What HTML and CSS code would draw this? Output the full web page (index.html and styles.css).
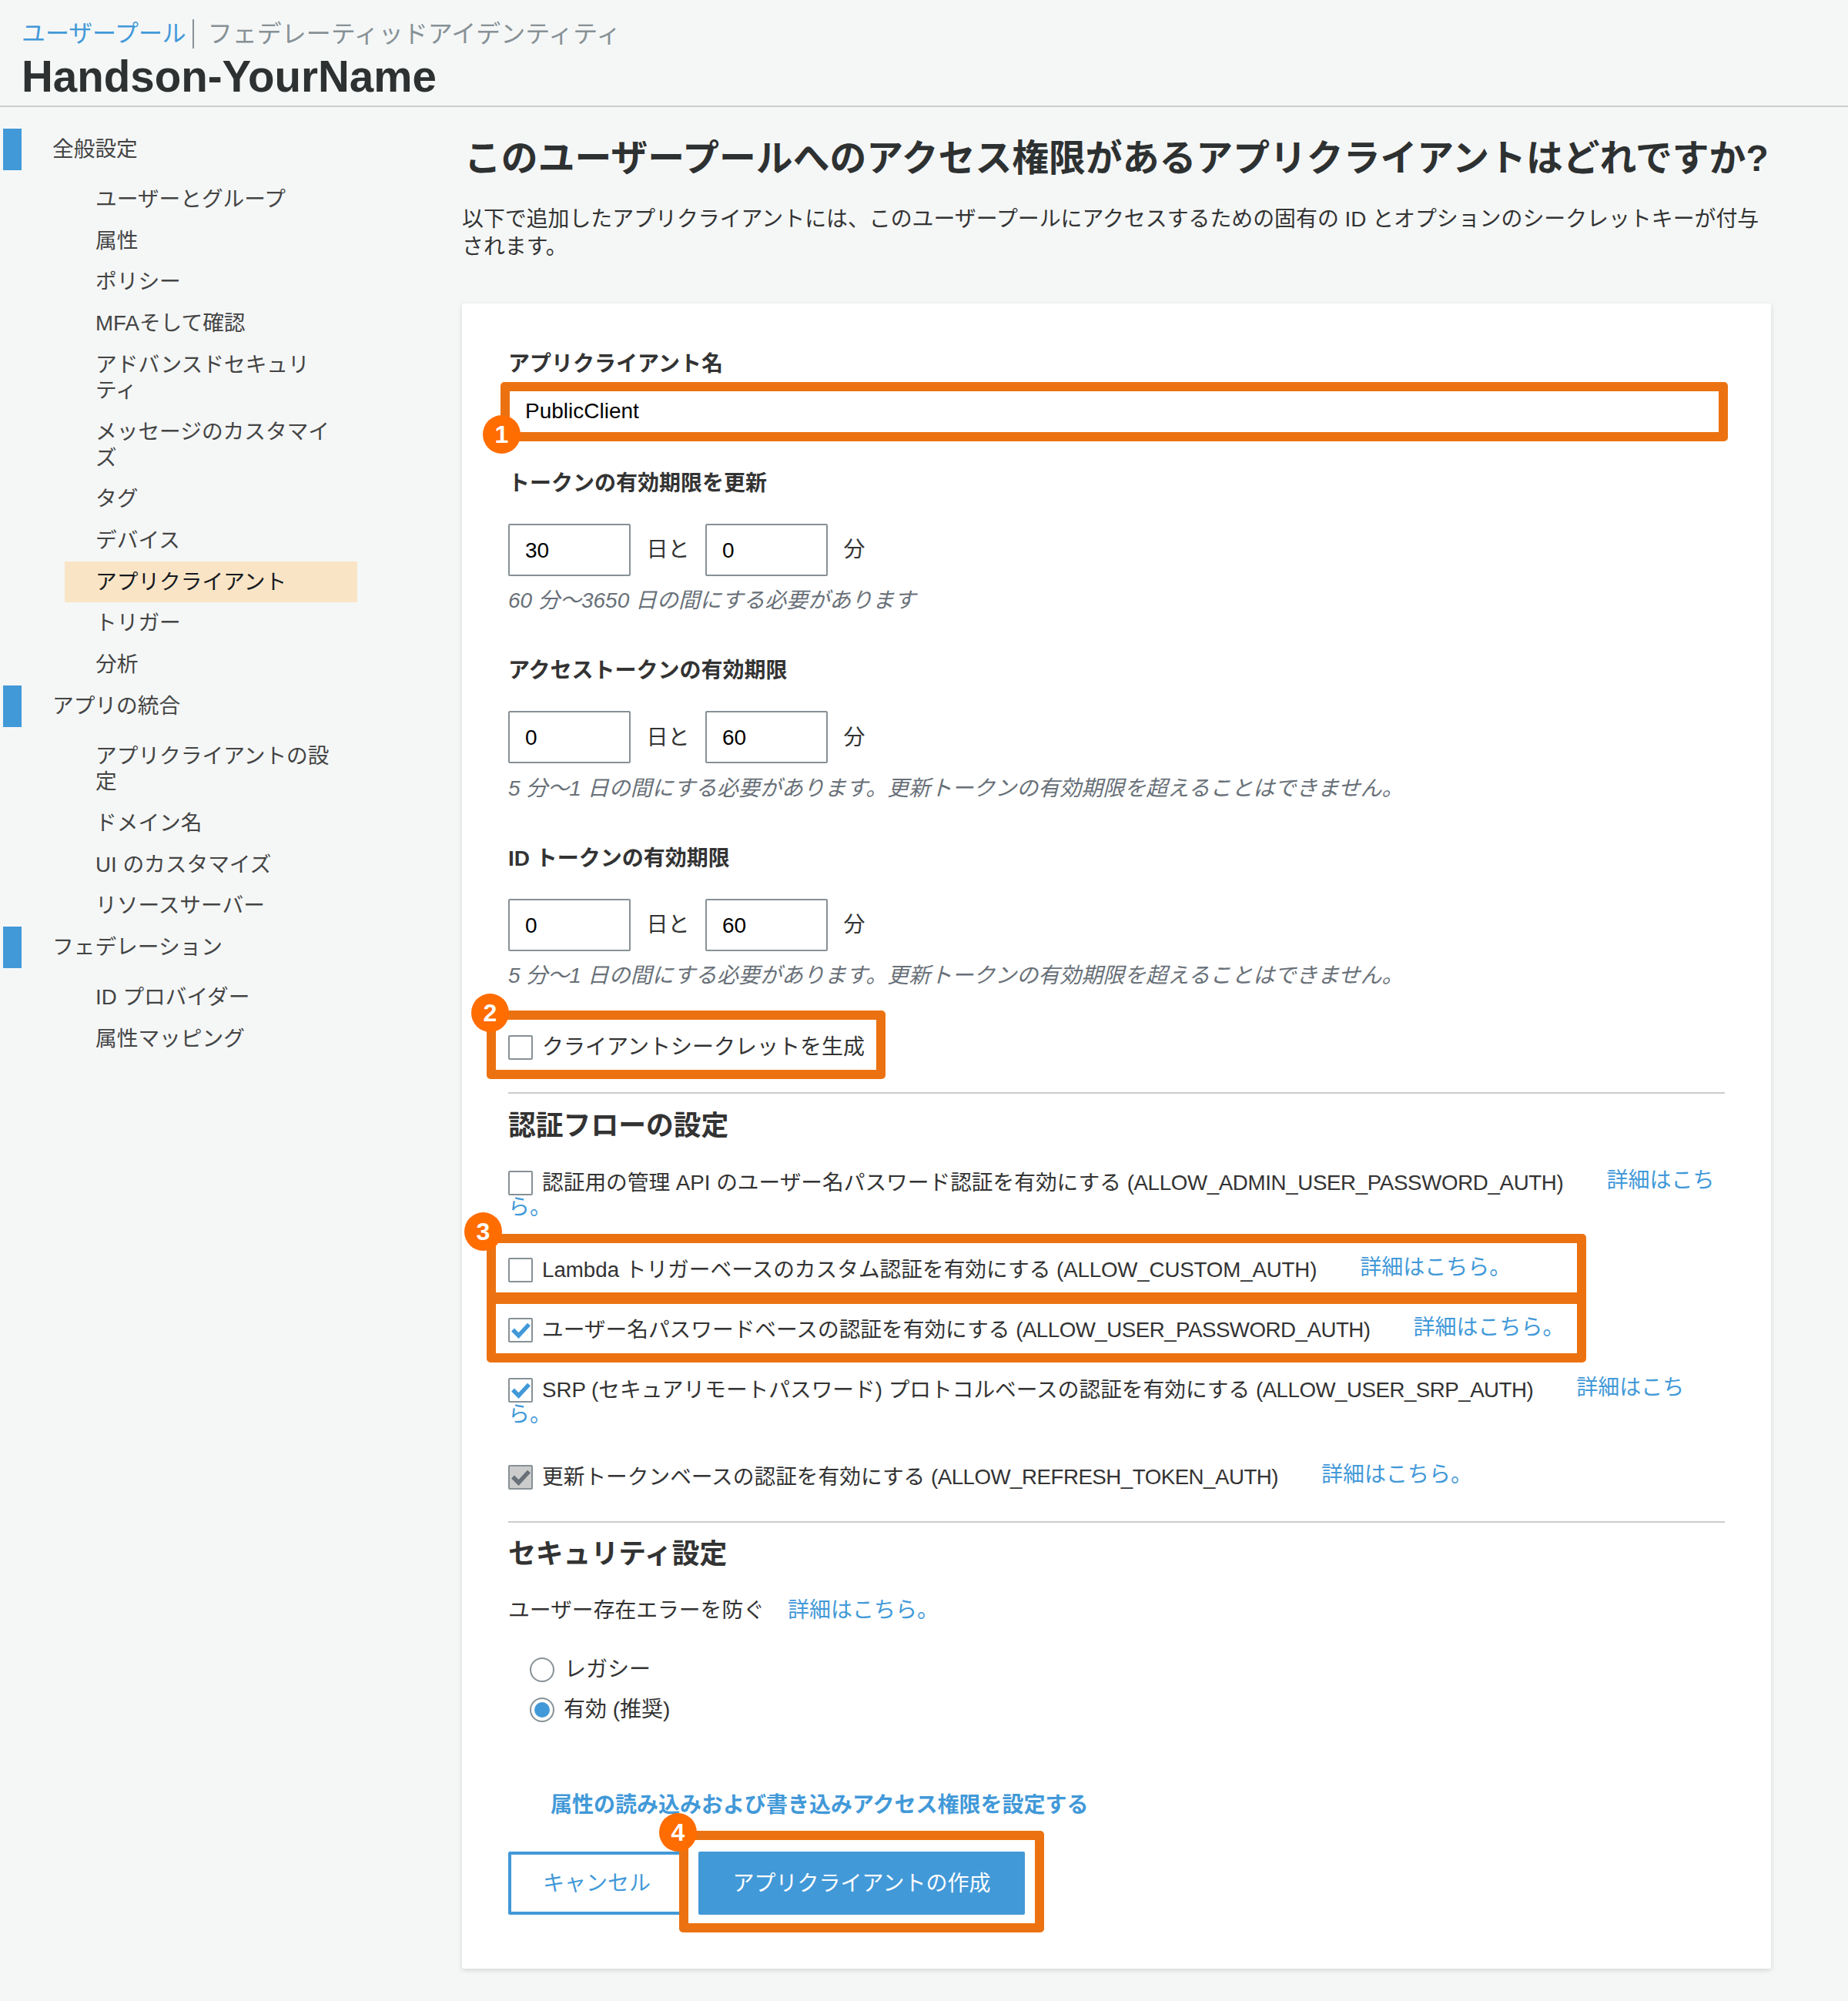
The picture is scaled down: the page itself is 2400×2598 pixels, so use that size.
FILE: index.html
```html
<!DOCTYPE html>
<html lang="ja">
<head>
<meta charset="utf-8">
<title>Handson-YourName</title>
<link rel="stylesheet" href="styles.css">
</head>
<body>
<header class="top">
  <div class="tabs"><a class="tab-on">ユーザープール</a><span class="tab-sep"></span><a class="tab-off">フェデレーティッドアイデンティティ</a></div>
  <div class="pool-name">Handson-YourName</div>
</header>
<div class="layout">
  <nav class="side">
    <div class="side-head">全般設定</div>
    <ul class="side-list">
      <li>ユーザーとグループ</li>
      <li>属性</li>
      <li>ポリシー</li>
      <li>MFAそして確認</li>
      <li>アドバンスドセキュリティ</li>
      <li>メッセージのカスタマイズ</li>
      <li>タグ</li>
      <li>デバイス</li>
      <li class="on">アプリクライアント</li>
      <li>トリガー</li>
      <li>分析</li>
    </ul>
    <div class="side-head">アプリの統合</div>
    <ul class="side-list">
      <li>アプリクライアントの設定</li>
      <li>ドメイン名</li>
      <li>UI のカスタマイズ</li>
      <li>リソースサーバー</li>
    </ul>
    <div class="side-head">フェデレーション</div>
    <ul class="side-list">
      <li>ID プロバイダー</li>
      <li>属性マッピング</li>
    </ul>
  </nav>
  <main class="main">
    <h1 class="title">このユーザープールへのアクセス権限があるアプリクライアントはどれですか?</h1>
    <p class="lead">以下で追加したアプリクライアントには、このユーザープールにアクセスするための固有の ID とオプションのシークレットキーが付与されます。</p>
    <section class="card">
      <div class="label">アプリクライアント名</div>
      <input class="name-input" type="text" value="PublicClient">

      <div class="label label-gap">トークンの有効期限を更新</div>
      <div class="time"><input class="num" type="text" value="30"><span>日と</span><input class="num" type="text" value="0"><span>分</span></div>
      <div class="hint">60 分〜3650 日の間にする必要があります</div>

      <div class="label label-gap">アクセストークンの有効期限</div>
      <div class="time"><input class="num" type="text" value="0"><span>日と</span><input class="num" type="text" value="60"><span>分</span></div>
      <div class="hint">5 分〜1 日の間にする必要があります。更新トークンの有効期限を超えることはできません。</div>

      <div class="label label-gap">ID トークンの有効期限</div>
      <div class="time"><input class="num" type="text" value="0"><span>日と</span><input class="num" type="text" value="60"><span>分</span></div>
      <div class="hint">5 分〜1 日の間にする必要があります。更新トークンの有効期限を超えることはできません。</div>

      <div class="secret"><span class="cb"></span>クライアントシークレットを生成</div>

      <hr class="rule rule-a">
      <h2 class="sub">認証フローの設定</h2>
      <div class="flows">
        <div class="flow"><span class="cb"></span>認証用の管理 API のユーザー名パスワード認証を有効にする <span class="api api-mid">(ALLOW_ADMIN_USER_PASSWORD_AUTH)</span><a class="more">詳細はこちら。</a></div>
        <div class="flow"><span class="cb"></span>Lambda トリガーベースのカスタム認証を有効にする <span class="api api-loose">(ALLOW_CUSTOM_AUTH)</span><a class="more">詳細はこちら。</a></div>
        <div class="flow"><span class="cb"><svg class="tick" viewBox="0 0 28 28"><path d="M4 13.5 L11.5 21 L25 6.5"/></svg></span>ユーザー名パスワードベースの認証を有効にする <span class="api">(ALLOW_USER_PASSWORD_AUTH)</span><a class="more">詳細はこちら。</a></div>
        <div class="flow"><span class="cb"><svg class="tick" viewBox="0 0 28 28"><path d="M4 13.5 L11.5 21 L25 6.5"/></svg></span>SRP (セキュアリモートパスワード) プロトコルベースの認証を有効にする <span class="api">(ALLOW_USER_SRP_AUTH)</span><a class="more">詳細はこちら。</a></div>
        <div class="flow"><span class="cb cb-off"><svg class="tick" viewBox="0 0 28 28"><path d="M4 13.5 L11.5 21 L25 6.5"/></svg></span>更新トークンベースの認証を有効にする <span class="api">(ALLOW_REFRESH_TOKEN_AUTH)</span><a class="more">詳細はこちら。</a></div>
      </div>

      <hr class="rule rule-b">
      <h2 class="sub">セキュリティ設定</h2>
      <div class="prevent">ユーザー存在エラーを防ぐ<a class="more more-tight">詳細はこちら。</a></div>
      <div class="radio radio-first"><span class="dot"></span>レガシー</div>
      <div class="radio radio-second"><span class="dot dot-on"></span>有効 (推奨)</div>
      <a class="attr">属性の読み込みおよび書き込みアクセス権限を設定する</a>
      <div class="actions"><button class="btn btn-ghost" type="button">キャンセル</button><button class="btn btn-solid" type="button">アプリクライアントの作成</button></div>

      <div class="mark mark-1"></div>
      <div class="mark mark-2"></div>
      <div class="mark mark-3a"></div>
      <div class="mark mark-3b"></div>
      <div class="mark mark-4"></div>
      <div class="badge badge-1">1</div>
      <div class="badge badge-2">2</div>
      <div class="badge badge-3">3</div>
      <div class="badge badge-4">4</div>
    </section>
  </main>
</div>
</body>
</html>
```
FILE: styles.css
```css
* { box-sizing: border-box; }
html, body { margin: 0; padding: 0; }
body {
  width: 2400px;
  height: 2598px;
  background: #f5f7f7;
  color: #333;
  font-family: "Liberation Sans", "Noto Sans CJK JP", sans-serif;
  font-size: 28px;
  line-height: 35px;
  overflow: hidden;
}

/* header */
.top { height: 139px; padding: 25px 0 0 28px; border-bottom: 2px solid #ccc; }
.tabs { display: flex; align-items: center; height: 38px; font-size: 30.9px; line-height: 38px; }
.tab-on { color: #4299d8; }
.tab-sep { width: 2px; height: 38px; margin: 0 18px 0 8px; background: #879196; }
.tab-off { color: #879196; font-size: 32px; }
.pool-name { margin-top: 7px; font-size: 56.5px; line-height: 60px; font-weight: 700; color: #2e3131; }

/* layout */
.layout { display: flex; }
.side { width: 600px; flex: none; padding-top: 28px; color: #444; font-size: 27.7px; }
.side-head { height: 54px; margin-left: 4px; padding-left: 40px; border-left: 24px solid #4299d8; line-height: 54px; }
.side-list { list-style: none; margin: 0 0 0 84px; padding: 11px 0 0; width: 380px; }
.side-list li { padding: 10.1px 30px 10.1px 40px; line-height: 33.5px; line-break: strict; }
.side-list li.on { background: #f9e5c6; color: #16191f; }

.main { width: 1700px; flex: none; }
.title { margin: 36.5px 0 0; padding-left: 3px; font-size: 47.83px; line-height: 60px; font-weight: 700; color: #2e3131; white-space: nowrap; }
.lead { margin: 31.5px 0 0; width: 1700px; font-size: 27.9px; line-height: 36px; color: #333; }

/* card */
.card {
  position: relative;
  margin-top: 55px;
  height: 2162px;
  padding: 61px 60px 70px;
  background: #fff;
  border-radius: 3px;
  box-shadow: 0 2px 6px rgba(0, 0, 0, 0.14);
}
.label { font-weight: 700; color: #333; height: 35px; }
.label-gap { margin-top: 56px; }
.name-input { display: block; width: 100%; height: 67px; margin-top: 10px; padding: 0 20px; border: 2px solid #879196; font: inherit; color: #000; }
.name-input + .label-gap { margin-top: 42.5px; }
.time { display: flex; align-items: center; gap: 20.5px; margin-top: 35px; height: 68px; }
.num { width: 159px; height: 68px; padding: 2px 20px 0; border: 2px solid #879196; border-radius: 2px; font: inherit; color: #000; background: #fff; }
.hint { margin-top: 14.5px; height: 35px; font-style: italic; color: #687078; }

.cb { display: inline-block; position: relative; width: 32px; height: 32px; margin-right: 12px; vertical-align: -7px; border: 2px solid #879196; border-radius: 2px; background: #fff; }
.cb-off { background: #ccc; }
.tick { display: block; width: 28px; height: 28px; }
.tick path { fill: none; stroke: #4299d8; stroke-width: 5.5; stroke-linejoin: miter; }
.cb-off .tick path { stroke: #687078; }

.secret { margin-top: 58px; }
.rule { margin: 0; height: 2px; border: 0; background: #ccc; }
.rule-a { margin-top: 41px; }
.rule-b { margin-top: 40px; }
.sub { margin: 16.5px 0 0; font-size: 35.8px; line-height: 50px; font-weight: 700; color: #333; }
.flows { display: flex; flex-direction: column; gap: 43px; margin-top: 31px; font-size: 27.7px; }
.api { letter-spacing: -0.5px; }
.api-mid { letter-spacing: -0.35px; }
.api-loose { letter-spacing: -0.15px; }
.more { margin-left: 56px; font-size: 28px; letter-spacing: 0; color: #4299d8; line-height: 29px; vertical-align: 3px; }
.more-tight { margin-left: 30px; vertical-align: 0; }
.prevent { margin-top: 29.5px; font-size: 27.8px; }
.radio { padding-left: 28px; }
.radio-first { margin-top: 42.5px; }
.radio-second { margin-top: 17px; }
.dot { display: inline-block; width: 32px; height: 32px; margin-right: 13px; vertical-align: -7px; border: 2px solid #879196; border-radius: 50%; background: #fff; }
.dot-on { margin-right: 12px; padding: 4px; background: #4299d8; background-clip: content-box; }
.attr { display: block; margin: 88.5px 0 0 55px; font-weight: 700; color: #4299d8; }
.actions { display: flex; gap: 17px; margin-top: 43px; }
.btn { height: 82px; padding: 2px 0 0; border-radius: 2px; font: inherit; cursor: pointer; }
.btn-ghost { width: 230px; background: #fff; color: #4299d8; border: 4px solid #4299d8; }
.btn-solid { width: 424px; background: #4299d8; color: #fff; border: 0; }

/* annotation overlays */
.mark { position: absolute; border: 12px solid #ec7211; border-radius: 5px; pointer-events: none; }
.mark-1 { left: 50px; top: 102px; width: 1594px; height: 77px; }
.mark-2 { left: 32px; top: 918px; width: 518px; height: 89px; }
.mark-3a { left: 32px; top: 1208px; width: 1428px; height: 88px; }
.mark-3b { left: 32px; top: 1287px; width: 1428px; height: 88px; }
.mark-4 { left: 282px; top: 1983px; width: 474px; height: 132px; }
.badge { position: absolute; display: flex; align-items: center; justify-content: center; width: 49px; height: 50px; border-radius: 50%; background: #ff6c00; color: #fff; font-size: 32px; font-weight: 700; line-height: 50px; }
.badge-1 { left: 27px; top: 145px; }
.badge-2 { left: 12px; top: 896px; }
.badge-3 { left: 3px; top: 1180px; }
.badge-4 { left: 256px; top: 1960px; }
```
